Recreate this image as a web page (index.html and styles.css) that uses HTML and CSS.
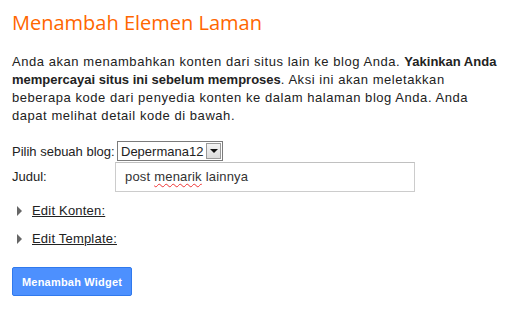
FILE: index.html
```html
<!DOCTYPE html>
<html lang="id">
<head>
    <meta charset="UTF-8">
    <meta name="viewport" content="width=device-width, initial-scale=1.0">
    <title>Menambah Elemen Laman</title>
    <link rel="stylesheet" href="styles.css">
</head>
<body>
    <div class="page">
        <h1 class="title">Menambah Elemen Laman</h1>
        <p class="intro">
            Anda akan menambahkan konten dari situs lain ke blog Anda. <b>Yakinkan Anda mempercayai situs ini sebelum memproses</b>. Aksi ini akan meletakkan beberapa kode dari penyedia konten ke dalam halaman blog Anda. Anda dapat melihat detail kode di bawah.
        </p>

        <div class="form">
            <label class="label">Pilih sebuah blog:</label>
            <div class="select">
                <span class="select-value">Depermana12</span>
                <span class="select-btn"><span class="arrow"></span></span>
            </div>

            <label class="label label-judul">Judul:</label>
            <div class="text-input">post <span class="typo">menarik</span> lainnya</div>
        </div>

        <div class="toggles">
            <div class="toggle"><span class="caret"></span><a href="#">Edit Konten:</a></div>
            <div class="toggle"><span class="caret"></span><a href="#">Edit Template:</a></div>
        </div>

        <button class="btn">Menambah Widget</button>
    </div>
</body>
</html>
```

FILE: styles.css
```css
body {
    margin: 0;
    background-color: #fff;
    font-family: "Liberation Sans", Arial, sans-serif;
    font-size: 13px;
    letter-spacing: 0.2px;
    color: #222;
}

.page {
    padding: 9px 12px 0 12px;
    width: 494px;
}

.title {
    margin: 0;
    font-family: "Open Sans", sans-serif;
    font-weight: normal;
    font-size: 20px;
    line-height: 28px;
    letter-spacing: 0;
    color: #ff6600;
}

.intro {
    margin: 16px 0 0 0;
    line-height: 18px;
    letter-spacing: 0.55px;
}

.intro b {
    letter-spacing: 0;
}

.form {
    display: grid;
    grid-template-columns: 103px auto;
    row-gap: 1px;
    margin-top: 16px;
    align-items: baseline;
    justify-items: start;
}

.label {
    line-height: 18px;
    white-space: nowrap;
    letter-spacing: 0;
}

.select {
    display: flex;
    align-items: flex-start;
    margin-left: 2px;
    width: 104px;
    height: 18px;
    border: 1px solid #7b7b7b;
    background-color: #fff;
    letter-spacing: 0;
}

.select-value {
    flex: 1;
    padding: 2px 0 0 3px;
    line-height: 16px;
}

.select-btn {
    display: flex;
    align-items: center;
    justify-content: center;
    width: 15px;
    height: 16px;
    margin: 1px 1px 0 0;
    border: 1px solid #9a9a9a;
    box-sizing: border-box;
    background: linear-gradient(#f4f4f4, #dcdcdc);
}

.arrow {
    width: 0;
    height: 0;
    border-left: 4px solid transparent;
    border-right: 4px solid transparent;
    border-top: 4px solid #111;
}

.text-input {
    width: 280px;
    padding: 5px 9px;
    line-height: 18px;
    border: 1px solid #ccc;
    border-top-color: #c0c0c0;
    color: #333;
}

.typo {
    text-decoration: underline wavy #e33;
    text-decoration-thickness: 1px;
    text-underline-offset: 2px;
    text-decoration-skip-ink: none;
}

.toggles {
    margin-top: 10px;
    display: flex;
    flex-direction: column;
    gap: 10px;
}

.toggle {
    display: flex;
    align-items: center;
    line-height: 18px;
}

.caret {
    width: 0;
    height: 0;
    margin: 0 10px 0 5px;
    border-top: 5px solid transparent;
    border-bottom: 5px solid transparent;
    border-left: 5px solid #666;
}

.toggle a {
    color: #222;
    text-decoration: underline;
}

.btn {
    margin-top: 19px;
    padding: 0 9px;
    height: 29px;
    border: 1px solid #3079ed;
    border-radius: 2px;
    background-color: #4d90fe;
    color: #fff;
    font-family: "Liberation Sans", Arial, sans-serif;
    font-size: 11px;
    font-weight: bold;
    letter-spacing: 0.2px;
    cursor: pointer;
}
```
